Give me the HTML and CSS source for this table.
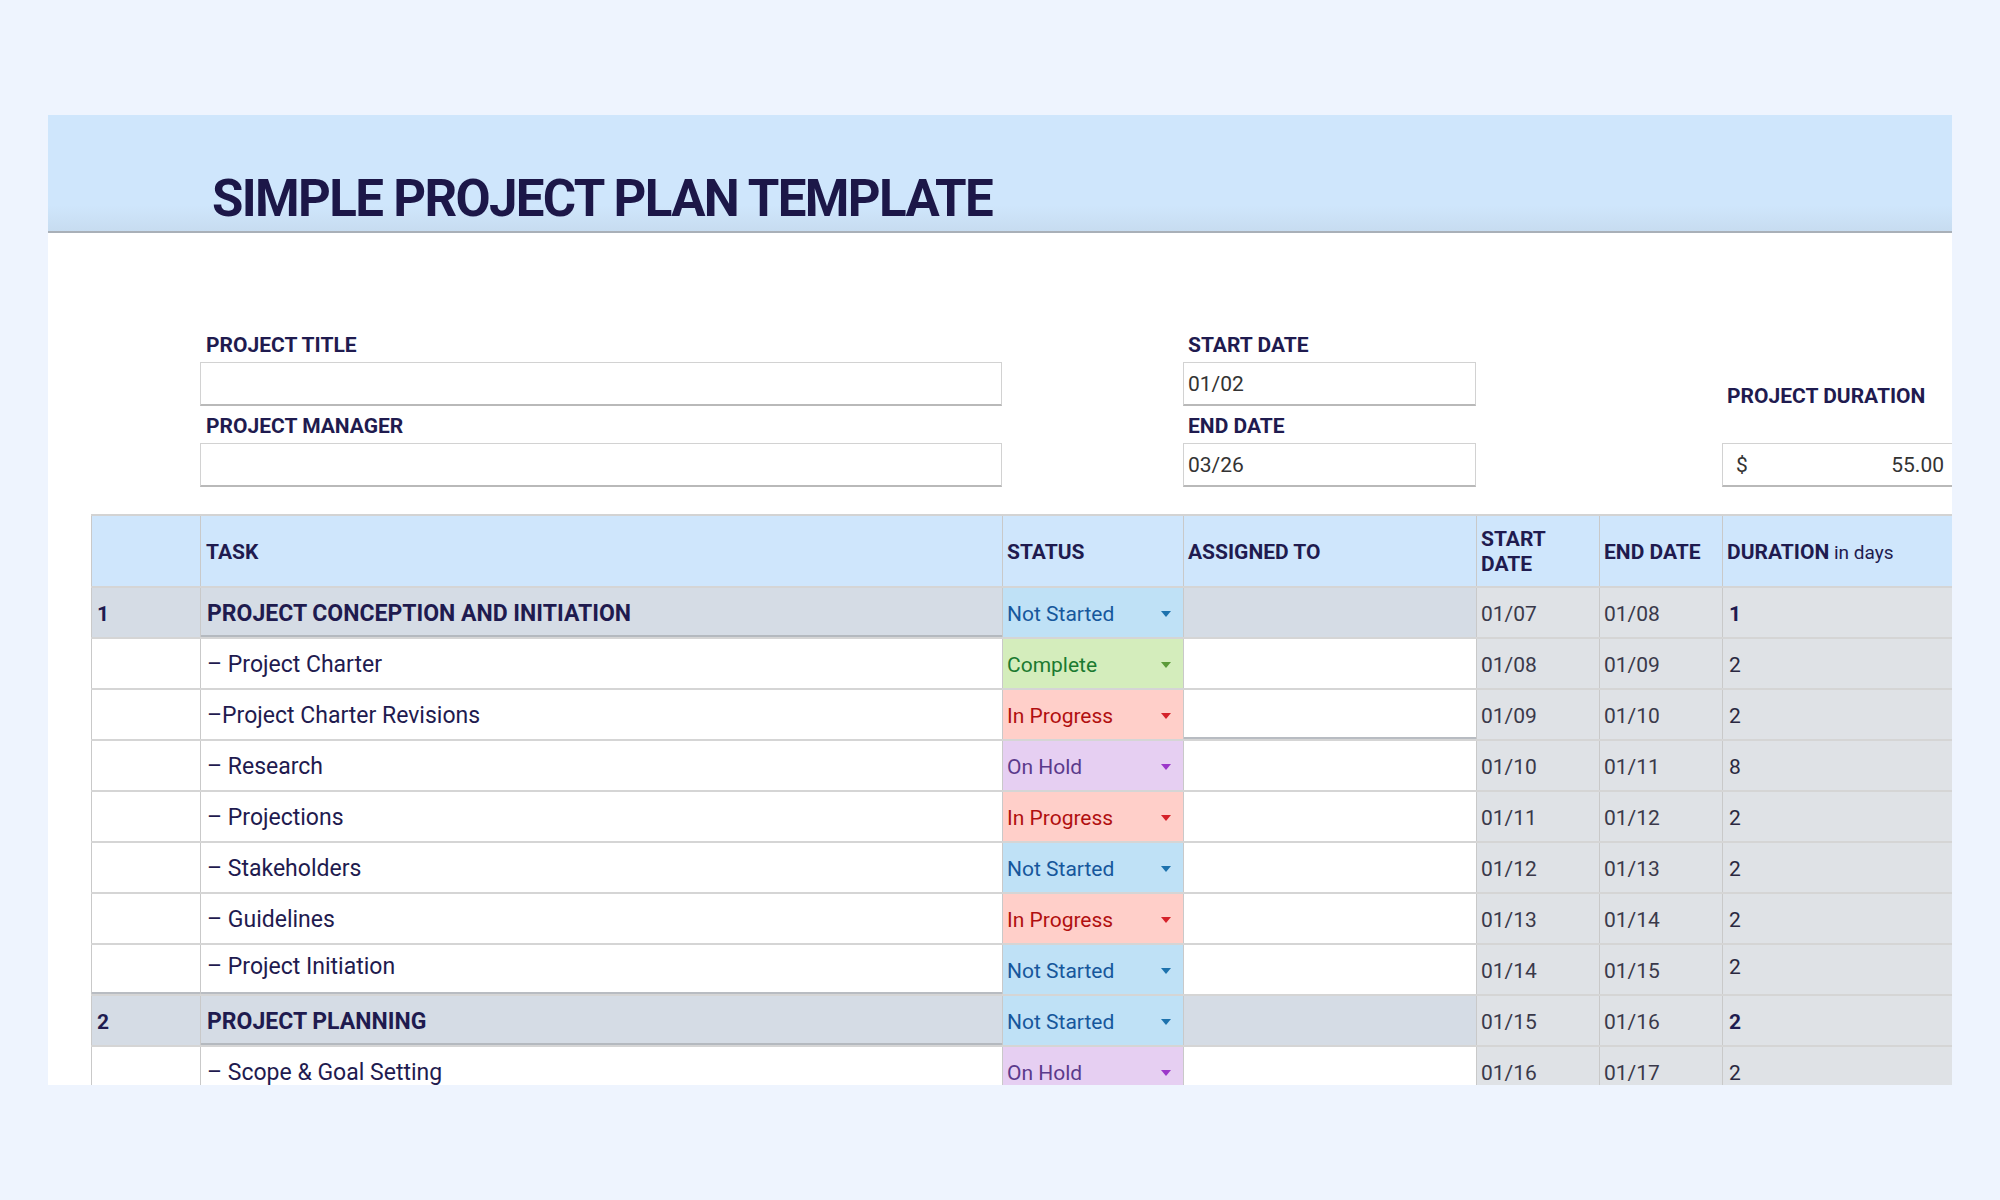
FILE: index.html
```html
<!DOCTYPE html>
<html lang="en">
<head>
<meta charset="utf-8">
<title>Simple Project Plan Template</title>
<link rel="stylesheet" href="styles.css">
</head>
<body>
<div class="page">
  <div class="card">
    <div class="card-header">
      <h1 class="title">SIMPLE PROJECT PLAN TEMPLATE</h1>
    </div>
    <div class="card-body">
      <div class="form">
        <div class="field f-title">
          <div class="label">PROJECT TITLE</div>
          <div class="box"></div>
        </div>
        <div class="field f-manager">
          <div class="label">PROJECT MANAGER</div>
          <div class="box"></div>
        </div>
        <div class="field f-start">
          <div class="label">START DATE</div>
          <div class="box">01/02</div>
        </div>
        <div class="field f-end">
          <div class="label">END DATE</div>
          <div class="box">03/26</div>
        </div>
        <div class="field f-duration">
          <div class="label label-dur">PROJECT DURATION</div>
          <div class="box box-money"><span>$</span><span>55.00</span></div>
        </div>
      </div>

      <div class="grid">
        <div class="trow thead">
          <div class="c"></div>
          <div class="c">TASK</div>
          <div class="c">STATUS</div>
          <div class="c">ASSIGNED TO</div>
          <div class="c">START<br>DATE</div>
          <div class="c">END DATE</div>
          <div class="c">DURATION<span class="light">&nbsp;in days</span></div>
        </div>

        <div class="trow section">
          <div class="c num">1</div>
          <div class="c task">PROJECT CONCEPTION AND INITIATION</div>
          <div class="c status s-not">Not Started<i class="arrow"></i></div>
          <div class="c assign"></div>
          <div class="c date">01/07</div>
          <div class="c date">01/08</div>
          <div class="c date dur">1</div>
        </div>

        <div class="trow">
          <div class="c num"></div>
          <div class="c task">– Project Charter</div>
          <div class="c status s-done">Complete<i class="arrow"></i></div>
          <div class="c assign"></div>
          <div class="c date">01/08</div>
          <div class="c date">01/09</div>
          <div class="c date dur">2</div>
        </div>

        <div class="trow">
          <div class="c num"></div>
          <div class="c task">–Project Charter Revisions</div>
          <div class="c status s-prog">In Progress<i class="arrow"></i></div>
          <div class="c assign heavy"></div>
          <div class="c date">01/09</div>
          <div class="c date">01/10</div>
          <div class="c date dur">2</div>
        </div>

        <div class="trow">
          <div class="c num"></div>
          <div class="c task">– Research</div>
          <div class="c status s-hold">On Hold<i class="arrow"></i></div>
          <div class="c assign"></div>
          <div class="c date">01/10</div>
          <div class="c date">01/11</div>
          <div class="c date dur">8</div>
        </div>

        <div class="trow">
          <div class="c num"></div>
          <div class="c task">– Projections</div>
          <div class="c status s-prog">In Progress<i class="arrow"></i></div>
          <div class="c assign"></div>
          <div class="c date">01/11</div>
          <div class="c date">01/12</div>
          <div class="c date dur">2</div>
        </div>

        <div class="trow">
          <div class="c num"></div>
          <div class="c task">– Stakeholders</div>
          <div class="c status s-not">Not Started<i class="arrow"></i></div>
          <div class="c assign"></div>
          <div class="c date">01/12</div>
          <div class="c date">01/13</div>
          <div class="c date dur">2</div>
        </div>

        <div class="trow">
          <div class="c num"></div>
          <div class="c task">– Guidelines</div>
          <div class="c status s-prog">In Progress<i class="arrow"></i></div>
          <div class="c assign"></div>
          <div class="c date">01/13</div>
          <div class="c date">01/14</div>
          <div class="c date dur">2</div>
        </div>

        <div class="trow">
          <div class="c num heavy"></div>
          <div class="c task heavy raised">– Project Initiation</div>
          <div class="c status s-not">Not Started<i class="arrow"></i></div>
          <div class="c assign"></div>
          <div class="c date">01/14</div>
          <div class="c date">01/15</div>
          <div class="c date dur raised">2</div>
        </div>

        <div class="trow section">
          <div class="c num">2</div>
          <div class="c task">PROJECT PLANNING</div>
          <div class="c status s-not">Not Started<i class="arrow"></i></div>
          <div class="c assign"></div>
          <div class="c date">01/15</div>
          <div class="c date">01/16</div>
          <div class="c date dur">2</div>
        </div>

        <div class="trow">
          <div class="c num"></div>
          <div class="c task">– Scope &amp; Goal Setting</div>
          <div class="c status s-hold">On Hold<i class="arrow"></i></div>
          <div class="c assign"></div>
          <div class="c date">01/16</div>
          <div class="c date">01/17</div>
          <div class="c date dur">2</div>
        </div>
      </div>
    </div>
  </div>
</div>
</body>
</html>
```

FILE: styles.css
```css
html, body {
  margin: 0;
  padding: 0;
}

body {
  background: #eef4fe;
  font-family: Roboto, "Noto Sans", "Liberation Sans", sans-serif;
  color: #1f1b4f;
  width: 2000px;
  height: 1200px;
  overflow: hidden;
}

.page {
  padding: 115px 48px 0 48px;
}

.card {
  width: 1904px;
  height: 970px;
  background: #ffffff;
  overflow: hidden;
}

.card-header {
  height: 116px;
  box-sizing: content-box;
  border-bottom: 2px solid #a9b0b8;
  background: linear-gradient(to bottom, #cfe6fc 0%, #cfe6fc 78%, #c7dcf0 100%);
  padding-left: 164px;
  display: flex;
  align-items: flex-start;
}

.title {
  margin: 58px 0 0 0;
  font-size: 51px;
  line-height: 51px;
  font-weight: 700;
  letter-spacing: -1.65px;
  color: #1c1748;
}

.card-body {
  padding: 100px 0 0 43px;
}

/* ---------- form ---------- */
.form {
  display: grid;
  grid-template-columns: 109px 802px 181px 293px 123px 123px 230px;
  grid-template-rows: auto auto;
}

.field {
  display: flex;
  flex-direction: column;
}

.f-title    { grid-column: 2; grid-row: 1; }
.f-manager  { grid-column: 2; grid-row: 2; }
.f-start    { grid-column: 4; grid-row: 1; }
.f-end      { grid-column: 4; grid-row: 2; }
.f-duration { grid-column: 7; grid-row: 1 / span 2; justify-content: flex-end; }

.label {
  font-size: 21px;
  line-height: 24px;
  font-weight: 700;
  color: #1f1b4f;
  padding-left: 6px;
  margin-bottom: 5px;
  white-space: nowrap;
}

.f-start .label,
.f-end .label {
  padding-left: 5px;
}

.label-dur {
  padding-left: 5px;
  margin-bottom: 35px;
}

.box {
  height: 44px;
  box-sizing: border-box;
  border: 1px solid #d2d2d2;
  border-bottom: 2px solid #b9b9b9;
  display: flex;
  align-items: center;
  padding-left: 4px;
  font-size: 21px;
  color: #333333;
  margin-bottom: 8px;
}

.f-manager .box,
.f-end .box,
.f-duration .box {
  margin-bottom: 0;
}

.box-money {
  justify-content: space-between;
  padding-left: 13px;
  padding-right: 8px;
  border-right: none;
}

/* ---------- table grid ---------- */
.grid {
  margin-top: 27px;
  border-top: 2px solid #d3d3d3;
}

.trow {
  display: grid;
  grid-template-columns: 109px 802px 181px 293px 123px 123px 230px;
  height: 51px;
  box-sizing: border-box;
  border-bottom: 2px solid #d5d5d5;
}

.c {
  display: flex;
  align-items: center;
  padding-left: 6px;
  padding-top: 2px;
  border-left: 1px solid #c9c9c9;
  font-size: 21px;
  color: #1f1b4f;
  white-space: nowrap;
}

.thead {
  height: 72px;
  background: #cfe6fc;
}

.thead .c {
  font-weight: 700;
  line-height: 25px;
  font-size: 21px;
  padding-left: 4px;
}

.thead .c:nth-child(2) {
  padding-left: 5px;
}

.light {
  font-weight: 400;
  font-size: 19px;
}

.task {
  font-size: 23px;
}

.num {
  padding-left: 5px;
}

.section .num,
.section .task {
  font-weight: 700;
  background: #d5dce5;
}

.section .assign {
  background: #d5dce5;
}

.section .task {
  box-shadow: inset 0 -2px 0 #b4b9bf;
}

.heavy {
  box-shadow: inset 0 -2px 0 #b8bcc2;
}

.raised {
  padding-top: 0;
  padding-bottom: 6px;
}

.date {
  background: #dfe2e6;
  color: #3a394a;
  font-size: 21px;
  padding-left: 4px;
}

.dur {
  padding-left: 6px;
  color: #2a2840;
}

.section .dur {
  font-weight: 700;
  color: #1f1b4f;
}

.status {
  padding-left: 4px;
  padding-right: 12px;
  justify-content: space-between;
}

.arrow {
  display: block;
  width: 0;
  height: 0;
  border-left: 5px solid transparent;
  border-right: 5px solid transparent;
  border-top: 6px solid currentColor;
}

.s-not  { background: #bfe1f6; color: #16579c; }
.s-not .arrow { border-top-color: #1d72ad; }

.s-done { background: #d4edbc; color: #1b7a30; }
.s-done .arrow { border-top-color: #5b9a39; }

.s-prog { background: #ffcfc9; color: #b10f10; }
.s-prog .arrow { border-top-color: #d5222a; }

.s-hold { background: #e6cff2; color: #5b3a8c; }
.s-hold .arrow { border-top-color: #9b37c9; }
```
